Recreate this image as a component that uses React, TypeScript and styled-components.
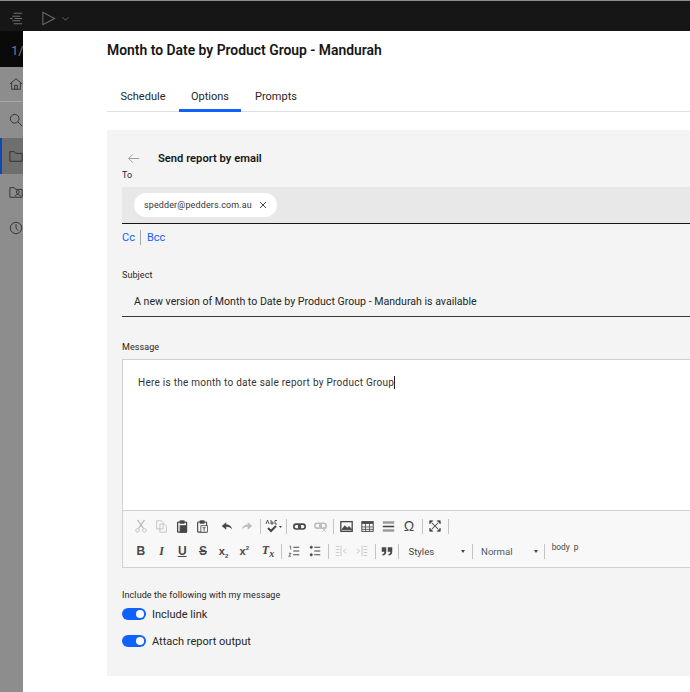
import React from "react";
import styled, { createGlobalStyle } from "styled-components";

const Global = createGlobalStyle`
  html, body { margin: 0; padding: 0; background: #fff; }
  * { box-sizing: border-box; }
  body { font-family: Roboto, "Noto Sans", "Liberation Sans", sans-serif; color: #161616; }
`;

const Page = styled.div`
  width: 690px; height: 692px; overflow: hidden; display: flex; flex-direction: column; background: #fff;
`;
const TopBar = styled.header`
  height: 31px; flex: none; background: #161616; border-top: 1px solid #8d8d8d; display: flex; align-items: center; padding: 5px 0 0 9px; color: #6f6f6f;
`;
const PlayGroup = styled.div`
  display: flex; align-items: center; gap: 5px; margin-left: 17px;
`;
const Body = styled.div`
  flex: 1; display: flex; min-height: 0;
`;
const Rail = styled.nav`
  width: 23px; flex: none; background: #8d8d8d; display: flex; flex-direction: column; overflow: hidden; color: #2b2b2b;
`;
const RailHead = styled.div`
  height: 36px; background: #0a0a0a; color: #6b7f93; font-size: 13px; display: flex; align-items: center; padding-left: 11px; white-space: nowrap; flex: none; padding-top: 2px;
`;
const RailItem = styled.div<{ $active?: boolean; $h: number; $rule?: boolean }>`
  height: ${p => p.$h}px; flex: none; display: flex; align-items: center; padding-left: 9px;
  background: ${p => (p.$active ? "#6f6f6f" : "transparent")};
  box-shadow: ${p => (p.$active ? "inset 2px 0 0 #0f46b8" : "none")};
  border-bottom: ${p => (p.$rule ? "1px solid #a8a8a8" : "none")};
`;
const Panel = styled.main`
  flex: 1; min-width: 0; padding: 10px 0 16px 84px; display: flex; flex-direction: column; overflow: hidden;
`;
const Title = styled.h1`
  margin: 0; font-size: 13.9px; line-height: 19px; font-weight: 600; white-space: nowrap; font-family: Roboto, sans-serif;
`;
const Tabs = styled.div`
  display: flex; margin-top: 27px; height: 25px; border-bottom: 1px solid #e0e0e0; flex: none;
`;
const Tab = styled.div<{ $active?: boolean; $w: number }>`
  width: ${p => p.$w}px; height: 25px; display: flex; justify-content: center; align-items: flex-start; font-size: 11px; line-height: 14px; padding-top: 3px; color: #262626;
  border-bottom: ${p => (p.$active ? "3px solid #0f62fe" : "none")};
  white-space: nowrap;
`;
const Card = styled.section`
  flex: 1; margin-top: 18px; background: #f4f4f4; padding: 21px 0 0 15px; display: flex; flex-direction: column; width: 600px;
`;
const BackRow = styled.div`
  display: flex; align-items: center; height: 14px; padding-left: 5px; color: #8d8d8d;
`;
const BackTitle = styled.h2`
  margin: 0 0 0 18px; font-size: 11.2px; font-weight: 600; color: #161616; white-space: nowrap;
`;
const Label = styled.label`
  display: block; font-size: 9px; line-height: 11px; color: #262626; letter-spacing: 0.08px;
`;
const ToLabel = styled(Label)`
  margin-top: 5px;
`;
const ToField = styled.div`
  margin-top: 6px; height: 37px; background: #e8e8e8; border-bottom: 1px solid #161616; padding: 6px 0 0 12px;
`;
const Chip = styled.span`
  display: inline-flex; align-items: center; height: 24px; border-radius: 12px; background: #fff; padding: 0 10px 0 10px; gap: 7px; font-size: 8.95px; letter-spacing: 0.15px; color: #333;
`;
const CcRow = styled.div`
  display: flex; align-items: center; height: 15px; margin-top: 6px; font-size: 11px; color: #0f62fe;
`;
const CcDivider = styled.span`
  width: 1px; height: 15px; background: #a8a8a8; margin: 0 6px 0 5px;
`;
const SubjectLabel = styled(Label)`
  margin-top: 25px;
`;
const SubjectField = styled.div`
  margin-top: 7px; height: 29px; border-bottom: 1px solid #393939; padding: 5px 0 0 12px; font-size: 10.6px; line-height: 18px; color: #262626; white-space: nowrap;
`;
const MessageLabel = styled(Label)`
  margin-top: 25px;
`;
const Editor = styled.div`
  margin-top: 6px; height: 209px; border: 1px solid #d1d1d1; background: #fff; display: flex; flex-direction: column; flex: none;
`;
const EditArea = styled.div`
  height: 150px; flex: none; padding: 15px 15px; font-size: 10px; line-height: 16px; letter-spacing: 0.26px; color: #333; white-space: nowrap;
`;
const Caret = styled.span`
  display: inline-block; width: 1px; height: 13px; background: #222; vertical-align: -3px;
`;
const Toolbar = styled.div`
  flex: 1; background: #f8f8f8; border-top: 1px solid #d1d1d1; padding: 5px 0 0 7.500px; display: flex; flex-direction: column; gap: 5px;
`;
const ToolRow = styled.div`
  display: flex; align-items: center; height: 20px;
`;
const Tool = styled.span<{ $off?: boolean; $gap?: number; $w?: number }>`
  width: ${p => p.$w ?? 20.7}px; height: 20px; flex: none; display: flex; align-items: center; justify-content: center; margin-left: ${p => p.$gap ?? 0}px;
  color: ${p => (p.$off ? "#bdbdbd" : "#474747")};
`;
const Sep = styled.span`
  width: 1px; height: 15px; background: #c4c4c4; flex: none; margin: 0 2.3px;
`;
const Combo = styled.span<{ $w: number; $color: string; $pad: number }>`
  width: ${p => p.$w}px; flex: none; display: flex; align-items: center; justify-content: space-between; font-size: 9.6px; color: ${p => p.$color}; padding: 1px 4px 0 ${p => p.$pad}px;
`;
const Caret2 = styled.span`
  width: 0; height: 0; border: 2.5px solid transparent; border-top: 3px solid #474747; border-bottom: 0;
`;
const Crumb = styled.span`
  font-size: 8.4px; color: #474747; margin-left: 4px; position: relative; top: -4px;
`;
const IncludeLabel = styled(Label)`
  margin-top: 22px;
`;
const ToggleRow = styled.div<{ $top: number }>`
  display: flex; align-items: center; gap: 6px; height: 14px; margin-top: ${p => p.$top}px; font-size: 11px; color: #262626; white-space: nowrap;
`;
const Toggle = styled.span`
  width: 24px; height: 12px; border-radius: 6px; background: #0f62fe; display: flex; justify-content: flex-end; align-items: center; padding-right: 2px; flex: none;
`;
const Knob = styled.span`
  width: 8px; height: 8px; border-radius: 50%; background: #fff;
`;
const TB = styled.span`
  font: 700 12px "Liberation Sans", sans-serif;
`;
const TI = styled.span`
  font: italic 700 12px "Liberation Serif", serif;
`;
const TU = styled(TB)`
  text-decoration: underline;
`;
const TS = styled(TB)`
  text-decoration: line-through;
`;
const TX = styled.span`
  font: 700 11px "Liberation Sans", sans-serif;
  & > sub, & > sup { font-size: 6px; line-height: 0; }
`;
const Omega = styled.span`
  font: 400 14px "Liberation Sans", sans-serif;
`;

type P = { children: React.ReactNode; s?: number; vb?: number };
const Ico = ({ children, s = 14, vb = 16 }: P) => (
  <svg width={s} height={s} viewBox={`0 0 ${vb} ${vb}`} fill="none" stroke="currentColor" strokeWidth="1">{children}</svg>
);
const Fill = ({ children, s = 12 }: P) => (
  <svg width={s} height={s} viewBox="0 0 16 16" fill="currentColor" stroke="none">{children}</svg>
);

export default function App() {
  return (
    <Page>
      <Global />
      <TopBar>
        <Ico s={15}>
          <path d="M5 2.500h9M3.500 5.500H12M6 8h8M1 8h3M3.500 10.500H12M5 13.500h9" strokeWidth="1.1" />
        </Ico>
        <PlayGroup>
          <Ico s={15}><path d="M2 1.500v13L14.500 8z" strokeWidth="1.1" /></Ico>
          <Ico s={9}><path d="M3 6l5 5 5-5" strokeWidth="1.6" /></Ico>
        </PlayGroup>
      </TopBar>
      <Body>
        <Rail>
          <RailHead>1/1</RailHead>
          <RailItem $h={35} $rule>
            <Ico><path d="M1 8 8 2l7 6M3 6.500V14h10V6.500M6.500 14V9.500h3V14" /></Ico>
          </RailItem>
          <RailItem $h={36}>
            <Ico><circle cx="6.500" cy="6.500" r="5" /><path d="m10 10 5 5" /></Ico>
          </RailItem>
          <RailItem $h={36} $active>
            <Ico><path d="M1 3h5l1.500 2H15v9H1z" /></Ico>
          </RailItem>
          <RailItem $h={36}>
            <Ico><path d="M1 3h5l1.500 2H15v9H1z" /><circle cx="10" cy="8" r="1.700" /><path d="M7 13c0-3 6-3 6 0" /></Ico>
          </RailItem>
          <RailItem $h={35}>
            <Ico><circle cx="8" cy="8" r="6.500" /><path d="M8 3.500V8l2.500 3" /></Ico>
          </RailItem>
        </Rail>
        <Panel>
          <Title>Month to Date by Product Group - Mandurah</Title>
          <Tabs>
            <Tab $w={72}>Schedule</Tab>
            <Tab $w={62} $active>Options</Tab>
            <Tab $w={70}>Prompts</Tab>
          </Tabs>
          <Card>
            <BackRow>
              <Ico s={13}><path d="M15 8H2M7 3 2 8l5 5" /></Ico>
              <BackTitle>Send report by email</BackTitle>
            </BackRow>
            <ToLabel>To</ToLabel>
            <ToField>
              <Chip>
                spedder@pedders.com.au
                <Ico s={8}><path d="m2 2 12 12M14 2 2 14" strokeWidth="1.8" /></Ico>
              </Chip>
            </ToField>
            <CcRow>Cc<CcDivider />Bcc</CcRow>
            <SubjectLabel>Subject</SubjectLabel>
            <SubjectField>A new version of Month to Date by Product Group - Mandurah is available</SubjectField>
            <MessageLabel>Message</MessageLabel>
            <Editor>
              <EditArea>Here is the month to date sale report by Product Group<Caret /></EditArea>
              <Toolbar>
                <ToolRow>
                  <Tool $off><Ico><circle cx="4" cy="13" r="2" /><circle cx="12" cy="13" r="2" /><path d="M5 11 12 1M11 11 4 1" strokeWidth="1.5" /></Ico></Tool>
                  <Tool $off><Ico s={13}><path d="M2 1h6l2 2v8H2zM6 5h6l2 2v8H6z" /></Ico></Tool>
                  <Tool><Ico s={13}><rect x="2" y="2.500" width="11" height="12.500" rx="1" strokeWidth="1.600" /><rect x="5" y="1" width="5" height="3" fill="currentColor" /><rect x="5" y="7" width="8" height="8" fill="currentColor" /></Ico></Tool>
                  <Tool><Ico s={13}><rect x="2" y="2.500" width="11" height="12.500" rx="1" strokeWidth="1.400" /><rect x="5" y="1" width="5" height="3" fill="currentColor" /><rect x="6" y="7" width="8" height="8" fill="#f8f8f8" /><path d="M8 9.500h4M10 9.500V14" /></Ico></Tool>
                  <Tool $gap={3}><Fill><path d="M1 8l6-5v3c4 0 7 2 8 7-2-3-4-4-8-4v4z" /></Fill></Tool>
                  <Tool $off><Fill><path d="M15 8 9 3v3C5 6 2 8 1 13c2-3 4-4 8-4v4z" /></Fill></Tool>
                  <Sep />
                  <Tool>
                    <svg width="18" height="14" viewBox="0 0 18 14" fill="none" stroke="currentColor">
                      <path d="M1 5 2.500 1 4 5M6 1v4h2V3H6M12 1.500H10V5h2" strokeWidth="0.9" />
                      <path d="m3 9 3 3 5-5" strokeWidth="2" />
                      <path d="M14 7h3l-1.500 2z" fill="currentColor" stroke="none" />
                    </svg>
                  </Tool>
                  <Sep />
                  <Tool><Ico s={13}><rect x="1" y="5" width="8" height="6" rx="3" strokeWidth="2" /><rect x="7" y="5" width="8" height="6" rx="3" strokeWidth="2" /></Ico></Tool>
                  <Tool $off><Ico s={13}><rect x="1" y="4" width="8" height="6" rx="3" strokeWidth="2" /><rect x="7" y="4" width="8" height="6" rx="3" strokeWidth="2" /><path d="m10 10 5 5M15 10l-5 5" /></Ico></Tool>
                  <Sep />
                  <Tool><Ico s={13}><rect x="1" y="2" width="14" height="12" strokeWidth="1.600" /><path d="m2 12 4-5 3 3 2-2 4 4z" fill="currentColor" /></Ico></Tool>
                  <Tool><Ico s={13}><rect x="1" y="2" width="14" height="12" strokeWidth="1.200" /><path d="M1 3.500h14" strokeWidth="2.500" /><path d="M1 8.500h14M1 11.500h14M5.500 3v11M10.500 3v11" /></Ico></Tool>
                  <Tool><Ico s={13}><path d="M1 8h14" strokeWidth="2" /><path d="M1 3h14M1 13h14" strokeWidth="3" stroke="#9a9a9a" /></Ico></Tool>
                  <Tool><Omega>Ω</Omega></Tool>
                  <Sep />
                  <Tool><Ico s={12}><path d="M1 1h4L1 5zM15 1h-4l4 4zM1 15h4l-4-4zM15 15h-4l4-4z" fill="currentColor" /><path d="M4 4l8 8M12 4l-8 8" strokeWidth="1.400" /></Ico></Tool>
                  <Sep />
                </ToolRow>
                <ToolRow>
                  <Tool><TB>B</TB></Tool>
                  <Tool><TI>I</TI></Tool>
                  <Tool><TU>U</TU></Tool>
                  <Tool><TS>S</TS></Tool>
                  <Tool><TX>x<sub>2</sub></TX></Tool>
                  <Tool><TX>x<sup>2</sup></TX></Tool>
                  <Tool $gap={3}><TI>T<sub>x</sub></TI></Tool>
                  <Sep />
                  <Tool><Ico s={12}><path d="M7 3h8M7 8h8M7 13h8" strokeWidth="1.600" /><path d="M2 1.500h1.500V6M1 11h3l-3 4h3" /></Ico></Tool>
                  <Tool><Ico s={12}><path d="M7 3h8M7 8h8M7 13h8" strokeWidth="1.600" /><circle cx="3" cy="3" r="1.500" fill="currentColor" /><circle cx="3" cy="13" r="1.500" fill="currentColor" /></Ico></Tool>
                  <Sep />
                  <Tool $off><Ico s={12}><path d="M1 2h5M1 6h5M1 10h5M1 14h5M8 1v14M15 5l-4 3 4 3" /></Ico></Tool>
                  <Tool $off><Ico s={12}><path d="M10 2h5M10 6h5M10 10h5M10 14h5M8 1v14M1 5l4 3-4 3" /></Ico></Tool>
                  <Sep />
                  <Tool $w={18}><Fill><path d="M1 3h6v6c0 3-2 5-5 5v-2c1.500 0 2.500-1 2.500-3H1zM9 3h6v6c0 3-2 5-5 5v-2c1.500 0 2.500-1 2.500-3H9z" /></Fill></Tool>
                  <Sep />
                  <Combo $w={68} $pad={7} $color="#474747">Styles<Caret2 /></Combo>
                  <Sep />
                  <Combo $w={67} $pad={6} $color="#4c5a68">Normal<Caret2 /></Combo>
                  <Sep />
                  <Crumb>body</Crumb>
                  <Crumb>p</Crumb>
                </ToolRow>
              </Toolbar>
            </Editor>
            <IncludeLabel>Include the following with my message</IncludeLabel>
            <ToggleRow $top={6}><Toggle><Knob /></Toggle>Include link</ToggleRow>
            <ToggleRow $top={13}><Toggle><Knob /></Toggle>Attach report output</ToggleRow>
          </Card>
        </Panel>
      </Body>
    </Page>
  );
}
